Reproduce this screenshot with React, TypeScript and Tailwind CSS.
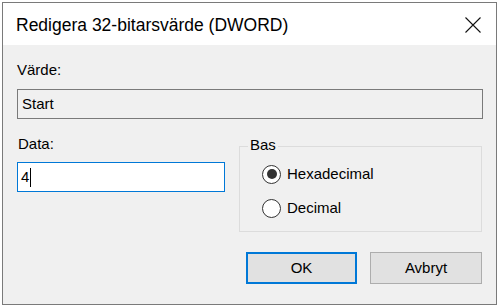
import React from "react";

function Radio({ checked, label }: { checked: boolean; label: string }) {
  return (
    <div className="flex items-center h-[20px]">
      <div className="w-[19px] h-[19px] rounded-full border border-[#333333] bg-white flex items-center justify-center">
        {checked && <div className="w-[10px] h-[10px] rounded-full bg-[#333333]" />}
      </div>
      <span className="ml-[6px] text-[15px] leading-[18px] text-black">{label}</span>
    </div>
  );
}

export default function App() {
  return (
    <div
      className="w-[499px] h-[306px] bg-white overflow-hidden pt-[2px] pl-[2px]"
      style={{ fontFamily: '"Liberation Sans", Arial, sans-serif' }}
    >
      <div className="w-[495px] h-[303px] border border-[#7a7a7a] bg-[#f0f0f0] flex flex-col">
        {/* Title bar */}
        <div className="h-[42px] bg-white flex items-center justify-between pl-[13px] pr-[15px]">
          <span className="text-[17.5px] leading-[20px] text-black pt-[1px]">
            Redigera 32-bitarsvärde (DWORD)
          </span>
          <svg width="16" height="16" viewBox="0 0 16 16" className="mt-[1px]">
            <path d="M0.5 0.5 L15.5 15.5 M15.5 0.5 L0.5 15.5" stroke="#111" strokeWidth="1.1" fill="none" />
          </svg>
        </div>

        {/* Body */}
        <div className="flex flex-col px-[14px] pt-[16px]">
          <div className="text-[15px] leading-[18px] text-black">Värde:</div>
          <div className="mt-[10px] h-[30px] w-[466px] border border-[#7a7a7a] bg-[#f0f0f0] flex items-center pl-[4px]">
            <span className="text-[15px] leading-[18px] text-black">Start</span>
          </div>

          <div className="flex mt-[16px]">
            <div className="flex flex-col w-[208px]">
              <div className="text-[15px] leading-[18px] text-black pl-[1px]">Data:</div>
              <div className="mt-[9px] h-[30px] w-[208px] border border-[#0078d7] bg-white flex items-center pl-[3px]">
                <span className="text-[15px] leading-[18px] text-black">4</span>
                <span className="w-[1px] h-[19px] bg-black ml-[1px]" />
              </div>
            </div>

            <div className="relative ml-[14px] mt-[11px] w-[243px] h-[86px] border border-[#dcdcdc]">
              <span className="absolute left-[8px] top-[-11px] px-[2px] bg-[#f0f0f0] text-[15px] leading-[18px] text-black">
                Bas
              </span>
              <div className="flex flex-col gap-[14px] pt-[17px] pl-[22px]">
                <Radio checked label="Hexadecimal" />
                <Radio checked={false} label="Decimal" />
              </div>
            </div>
          </div>

          <div className="flex justify-end gap-[13px] mt-[20px]">
            <div className="w-[111px] h-[32px] border-2 border-[#0078d7] bg-[#e1e1e1] flex items-center justify-center text-[15px] leading-[18px] text-black">
              OK
            </div>
            <div className="w-[112px] h-[32px] border border-[#adadad] bg-[#e1e1e1] flex items-center justify-center text-[15px] leading-[18px] text-black">
              Avbryt
            </div>
          </div>
        </div>
      </div>
    </div>
  );
}
